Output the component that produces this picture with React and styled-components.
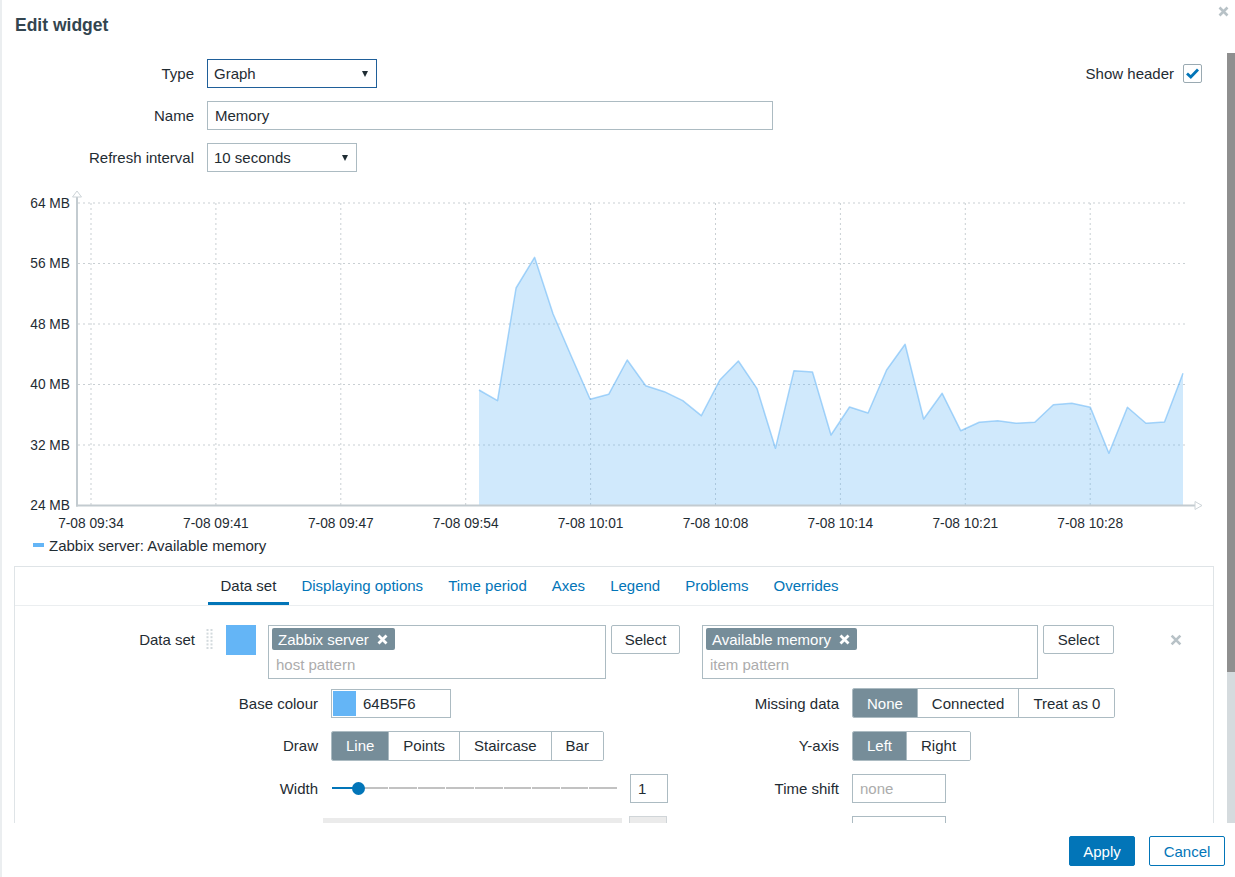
import React from "react";
import styled, { createGlobalStyle } from "styled-components";

const C = {
  text: "#1f2c33",
  blue: "#0275b8",
  border: "#acbbc2",
  tag: "#768d99",
  swatch: "#64B5F6",
  placeholder: "#acacac",
};

const GlobalStyle = createGlobalStyle`
  html, body { margin: 0; padding: 0; }
  body {
    background: #ebeef0;
    font-family: "Liberation Sans", Arial, sans-serif;
    font-size: 15px;
    color: ${C.text};
    overflow: hidden;
  }
  * { box-sizing: border-box; }
`;

const Dialog = styled.div`
  position: relative;
  margin-left: 2px;
  width: 1233px;
  height: 877px;
  background: #fff;
  display: flex;
  flex-direction: column;
`;

const Header = styled.div`
  flex: none;
  height: 53px;
  padding: 12.5px 13px 0;
`;

const Title = styled.h4`
  margin: 0;
  font-size: 17.5px;
  line-height: 24px;
  font-weight: bold;
  color: #33454f;
`;

const CloseButton = styled.button`
  position: absolute;
  top: 6px;
  right: 6px;
  width: 11px;
  height: 11px;
  padding: 0;
  border: 0;
  background: none;
  display: flex;
`;

const Body = styled.div`
  flex: 1;
  min-height: 0;
  display: flex;
`;

const Scroller = styled.div`
  flex: 1;
  min-width: 0;
  overflow: hidden;
`;

const ScrollRail = styled.div`
  flex: none;
  width: 8px;
  background: #d5dbde;
  display: flex;
  flex-direction: column;
`;

const ScrollThumb = styled.div`
  height: ${(p) => p.$h}px;
  background: #8f8f8f;
`;

const TopForm = styled.div`
  display: grid;
  grid-template-columns: 192px 1fr;
  column-gap: 13px;
  row-gap: 13px;
  padding: 6px 25px 0 0;
`;

const Label = styled.div`
  text-align: right;
  align-self: center;
  line-height: 18px;
  white-space: nowrap;
`;

const FieldCell = styled.div`
  display: flex;
  align-items: center;
  justify-content: space-between;
`;

const SelectBox = styled.div`
  width: ${(p) => p.$w}px;
  height: 29px;
  border: 1px solid ${(p) => (p.$focus ? "#1f5f99" : C.border)};
  padding: 0 8px 0 6px;
  display: flex;
  align-items: center;
  justify-content: space-between;
  background: #fff;
`;

const Arrow = styled.span`
  width: 0;
  height: 0;
  border-left: 3.5px solid transparent;
  border-right: 3.5px solid transparent;
  border-top: 6px solid ${C.text};
`;

const TextInput = styled.div`
  width: ${(p) => p.$w}px;
  height: 29px;
  border: 1px solid ${(p) => (p.$disabled ? "#d0d5d8" : C.border)};
  padding: 0 7px;
  display: flex;
  align-items: center;
  flex: none;
  color: ${(p) => (p.$placeholder ? C.placeholder : C.text)};
  background: ${(p) => (p.$disabled ? "#ebebeb" : "#fff")};
`;

const CheckRow = styled.label`
  display: flex;
  align-items: center;
  gap: 9px;
`;

const CheckBox = styled.span`
  width: 19px;
  height: 19px;
  border: 1px solid #9aaab2;
  border-radius: 2px;
  display: flex;
  align-items: center;
  justify-content: center;
`;

const ChartSvg = styled.svg`
  display: block;
  margin-top: 16px;
`;

const Legend = styled.div`
  height: 20px;
  display: flex;
  align-items: center;
  gap: 5px;
  padding-left: 31px;
`;

const LegendMark = styled.span`
  width: 11px;
  height: 4px;
  background: ${C.swatch};
`;

const TabBox = styled.div`
  margin: 11px 13px 0 12px;
  border: 1px solid #dfe4e7;
`;

const TabBar = styled.div`
  display: flex;
  height: 39px;
  padding-left: 193px;
  border-bottom: 1px solid #ebeef0;
`;

const Tab = styled.div`
  padding: 0 12.5px 1px;
  display: flex;
  align-items: center;
  color: ${(p) => (p.$active ? C.text : C.blue)};
  box-shadow: ${(p) => (p.$active ? `inset 0 -3px 0 ${C.blue}` : "none")};
  white-space: nowrap;
`;

const TabPanel = styled.div`
  padding: 19px 0 120px;
`;

const DataSetRow = styled.div`
  display: flex;
  align-items: flex-start;
`;

const DataSetLabel = styled.div`
  width: 180px;
  text-align: right;
  line-height: 29px;
`;

const DragHandle = styled.svg`
  margin: 3px 0 0 11px;
  flex: none;
`;

const ColorSquare = styled.div`
  margin-left: 13px;
  width: 30px;
  height: 30px;
  background: ${C.swatch};
  flex: none;
`;

const MultiSelect = styled.div`
  margin-left: ${(p) => p.$ml}px;
  width: ${(p) => p.$w}px;
  height: 54px;
  border: 1px solid ${C.border};
  padding: 2px 3px 0;
  display: flex;
  flex-direction: column;
  flex: none;
`;

const Tag = styled.span`
  align-self: flex-start;
  display: inline-flex;
  align-items: center;
  gap: 8px;
  height: 22px;
  padding: 0 7px 0 6px;
  background: ${C.tag};
  color: #fff;
  border-radius: 2px;
`;

const Placeholder = styled.span`
  padding: 2px 0 0 4px;
  line-height: 26px;
  color: ${C.placeholder};
`;

const Button = styled.button`
  margin-left: ${(p) => p.$ml || 0}px;
  width: ${(p) => p.$w}px;
  height: ${(p) => p.$h || 29}px;
  border: 1px solid ${(p) => (p.$primary || p.$outline ? C.blue : C.border)};
  border-radius: 2px;
  background: ${(p) => (p.$primary ? C.blue : "#fff")};
  color: ${(p) => (p.$primary ? "#fff" : p.$outline ? C.blue : C.text)};
  font-family: inherit;
  font-size: 15px;
  padding: 0;
  flex: none;
`;

const RemoveButton = styled.button`
  margin: 9px 0 0 56px;
  width: 12px;
  height: 12px;
  padding: 0;
  border: 0;
  background: none;
  display: flex;
`;

const OptionsGrid = styled.div`
  display: grid;
  grid-template-columns: 303px 349px 146px auto;
  column-gap: 13px;
  row-gap: 12.5px;
  margin-top: 9px;
  grid-auto-rows: 30px;
  align-items: center;
`;

const OptLabel = styled.div`
  text-align: right;
  white-space: nowrap;
`;

const OptField = styled.div`
  display: flex;
  align-items: center;
  align-self: ${(p) => (p.$top ? "start" : "center")};
`;

const ColorInput = styled.div`
  width: 120px;
  height: 29px;
  border: 1px solid ${C.border};
  padding: 1px;
  display: flex;
  align-items: center;
  gap: 7px;
`;

const ColorChip = styled.span`
  width: 23px;
  height: 25px;
  background: ${C.swatch};
`;

const Segmented = styled.div`
  display: inline-flex;
  height: 30px;
  border: 1px solid ${C.border};
  border-radius: 2px;
  overflow: hidden;
`;

const Segment = styled.span`
  padding: 0 14px;
  display: flex;
  align-items: center;
  background: ${(p) => (p.$active ? C.tag : "#fff")};
  color: ${(p) => (p.$active ? "#fff" : C.text)};
  & + & { border-left: 1px solid ${C.border}; }
`;

const Slider = styled.div`
  position: relative;
  margin-left: 1px;
  width: 286px;
  height: 14px;
  display: flex;
  align-items: center;
  flex: none;
`;

const SliderTrack = styled.div`
  width: 100%;
  height: 2px;
  background: repeating-linear-gradient(
    to right,
    #c2c2c2 0,
    #c2c2c2 27.6px,
    #fff 27.6px,
    #fff 28.6px
  );
`;

const SliderFill = styled.div`
  position: absolute;
  left: 0;
  top: 6px;
  height: 2px;
  background: ${C.blue};
`;

const SliderThumb = styled.div`
  position: absolute;
  top: 0.5px;
  width: 13px;
  height: 13px;
  border-radius: 50%;
  background: ${C.blue};
`;

const DisabledBar = styled.div`
  margin: 2px 0 0 -8px;
  width: 299px;
  height: 16px;
  background: #ebebeb;
  align-self: flex-start;
  flex: none;
`;

const Footer = styled.div`
  flex: none;
  height: 54px;
  display: flex;
  justify-content: flex-end;
  align-items: flex-start;
  gap: 14px;
  padding: 13px 10px 0 0;
`;

const XIcon = ({ size = 11, color, width = 2.6 }) => (
  <svg width={size} height={size} viewBox="0 0 11 11">
    <path d="M1.5 1.5L9.5 9.5M9.5 1.5L1.5 9.5" stroke={color} strokeWidth={width} fill="none" />
  </svg>
);

const GRID_X = Array.from({ length: 9 }, (_, i) => 91 + 124.9 * i);
const GRID_Y = Array.from({ length: 6 }, (_, j) => 203 + 60.5 * j);
const Y_LABELS = ["64 MB", "56 MB", "48 MB", "40 MB", "32 MB", "24 MB"];
const X_LABELS = [
  "7-08 09:34",
  "7-08 09:41",
  "7-08 09:47",
  "7-08 09:54",
  "7-08 10:01",
  "7-08 10:08",
  "7-08 10:14",
  "7-08 10:21",
  "7-08 10:28",
];
const DATA_Y = [
  390, 400.7, 288, 257.3, 314, 357, 399.3, 394.3, 360, 385.7, 391.7, 400.7, 415.7,
  380, 361, 388.3, 448.3, 370.7, 372, 435, 407, 413, 370, 344.3, 419, 393.3, 430.7,
  422.3, 420.7, 423.3, 422.3, 404.7, 403.3, 407.3, 453.3, 407.3, 423.3, 422, 373.3,
];
const STEP = 704 / (DATA_Y.length - 1);
const PTS = DATA_Y.map((y, i) => [479 + i * STEP, y]);
const LINE = PTS.map((p) => p.join(",")).join(" ");
const AREA = `M479,505 L${PTS.map((p) => p.join(",")).join(" L")} L1183,505 Z`;

const Chart = () => (
  <ChartSvg width={1225} height={347} viewBox="2 188 1225 347">
    {GRID_Y.slice(0, 5).map((y) => (
      <line key={y} x1={78} x2={1188} y1={y} y2={y} stroke="#c9cfd3" strokeDasharray="2 3" />
    ))}
    {GRID_X.map((x) => (
      <line key={x} x1={x} x2={x} y1={203} y2={505} stroke="#c9cfd3" strokeDasharray="2 3" />
    ))}
    <path d={AREA} fill="rgba(100,181,246,0.3)" />
    <polyline points={LINE} fill="none" stroke="rgba(100,181,246,0.55)" strokeWidth="1.5" strokeLinejoin="round" />
    <line x1={77} x2={77} y1={197} y2={506.5} stroke="#c3cbd0" strokeWidth="2" />
    <line x1={76} x2={1195} y1={505.5} y2={505.5} stroke="#c3cbd0" strokeWidth="2" />
    <path d="M72.5,197 L77,191 L81.5,197 Z" fill="#fff" stroke="#cdd4d8" strokeWidth="1" />
    <path d="M1195,501.5 L1202,505.5 L1195,509.5 Z" fill="#fff" stroke="#cdd4d8" strokeWidth="1" />
    {Y_LABELS.map((t, j) => (
      <text
        key={t}
        x={70}
        y={GRID_Y[j]}
        dy="0.36em"
        textAnchor="end"
        fontFamily="Liberation Sans, Arial, sans-serif"
        fontSize="13.75"
        fill={C.text}
      >
        {t}
      </text>
    ))}
    {X_LABELS.map((t, i) => (
      <text
        key={t}
        x={GRID_X[i]}
        y={523}
        dy="0.36em"
        textAnchor="middle"
        fontFamily="Liberation Sans, Arial, sans-serif"
        fontSize="13.75"
        fill={C.text}
      >
        {t}
      </text>
    ))}
  </ChartSvg>
);

const Handle = () => (
  <DragHandle width="7" height="22" viewBox="0 0 7 22">
    {Array.from({ length: 6 }).map((_, k) => (
      <g key={k} fill="#d3dadd">
        <rect x="0.5" y={1 + k * 3.6} width="2" height="2" />
        <rect x="4.5" y={1 + k * 3.6} width="2" height="2" />
      </g>
    ))}
  </DragHandle>
);

const TABS = ["Data set", "Displaying options", "Time period", "Axes", "Legend", "Problems", "Overrides"];

export default function App() {
  return (
    <>
      <GlobalStyle />
      <Dialog>
        <Header>
          <Title>Edit widget</Title>
        </Header>
        <CloseButton aria-label="Close">
          <XIcon color="#b8c2c7" />
        </CloseButton>
        <Body>
          <Scroller>
            <TopForm>
              <Label>Type</Label>
              <FieldCell>
                <SelectBox $w={170} $focus>
                  <span>Graph</span>
                  <Arrow />
                </SelectBox>
                <CheckRow>
                  Show header
                  <CheckBox>
                    <svg width="15" height="13" viewBox="0 0 15 13">
                      <path d="M2 6.5L5.8 10L13 2.5" stroke={C.blue} strokeWidth="2.8" fill="none" />
                    </svg>
                  </CheckBox>
                </CheckRow>
              </FieldCell>
              <Label>Name</Label>
              <FieldCell>
                <TextInput $w={566}>Memory</TextInput>
              </FieldCell>
              <Label>Refresh interval</Label>
              <FieldCell>
                <SelectBox $w={150}>
                  <span>10 seconds</span>
                  <Arrow />
                </SelectBox>
              </FieldCell>
            </TopForm>

            <Chart />
            <Legend>
              <LegendMark />
              <span>Zabbix server: Available memory</span>
            </Legend>

            <TabBox>
              <TabBar>
                {TABS.map((t, i) => (
                  <Tab key={t} $active={i === 0}>
                    {t}
                  </Tab>
                ))}
              </TabBar>
              <TabPanel>
                <DataSetRow>
                  <DataSetLabel>Data set</DataSetLabel>
                  <Handle />
                  <ColorSquare />
                  <MultiSelect $ml={12} $w={338}>
                    <Tag>
                      Zabbix server
                      <XIcon size={11} color="#fff" width={2.8} />
                    </Tag>
                    <Placeholder>host pattern</Placeholder>
                  </MultiSelect>
                  <Button $ml={5} $w={69}>Select</Button>
                  <MultiSelect $ml={22} $w={336}>
                    <Tag>
                      Available memory
                      <XIcon size={11} color="#fff" width={2.8} />
                    </Tag>
                    <Placeholder>item pattern</Placeholder>
                  </MultiSelect>
                  <Button $ml={5} $w={71}>Select</Button>
                  <RemoveButton aria-label="Remove">
                    <XIcon size={12} color="#b8c2c7" width={2.4} />
                  </RemoveButton>
                </DataSetRow>

                <OptionsGrid>
                  <OptLabel>Base colour</OptLabel>
                  <OptField>
                    <ColorInput>
                      <ColorChip />
                      <span>64B5F6</span>
                    </ColorInput>
                  </OptField>
                  <OptLabel>Missing data</OptLabel>
                  <OptField>
                    <Segmented>
                      <Segment $active>None</Segment>
                      <Segment>Connected</Segment>
                      <Segment>Treat as 0</Segment>
                    </Segmented>
                  </OptField>

                  <OptLabel>Draw</OptLabel>
                  <OptField>
                    <Segmented>
                      <Segment $active>Line</Segment>
                      <Segment>Points</Segment>
                      <Segment>Staircase</Segment>
                      <Segment>Bar</Segment>
                    </Segmented>
                  </OptField>
                  <OptLabel>Y-axis</OptLabel>
                  <OptField>
                    <Segmented>
                      <Segment $active>Left</Segment>
                      <Segment>Right</Segment>
                    </Segmented>
                  </OptField>

                  <OptLabel>Width</OptLabel>
                  <OptField>
                    <Slider>
                      <SliderTrack />
                      <SliderFill style={{ width: 26 }} />
                      <SliderThumb style={{ left: 26 - 6.5 }} />
                    </Slider>
                    <TextInput $w={38} style={{ marginLeft: 12 }}>1</TextInput>
                  </OptField>
                  <OptLabel>Time shift</OptLabel>
                  <OptField>
                    <TextInput $w={94} $placeholder>none</TextInput>
                  </OptField>

                  <OptLabel />
                  <OptField $top>
                    <DisabledBar />
                    <TextInput $w={38} $disabled style={{ marginLeft: 7 }} />
                  </OptField>
                  <OptLabel />
                  <OptField $top>
                    <TextInput $w={94} />
                  </OptField>
                </OptionsGrid>
              </TabPanel>
            </TabBox>
          </Scroller>
          <ScrollRail>
            <ScrollThumb $h={619} />
          </ScrollRail>
        </Body>
        <Footer>
          <Button $primary $w={66} $h={30}>Apply</Button>
          <Button $outline $w={76} $h={30}>Cancel</Button>
        </Footer>
      </Dialog>
    </>
  );
}
